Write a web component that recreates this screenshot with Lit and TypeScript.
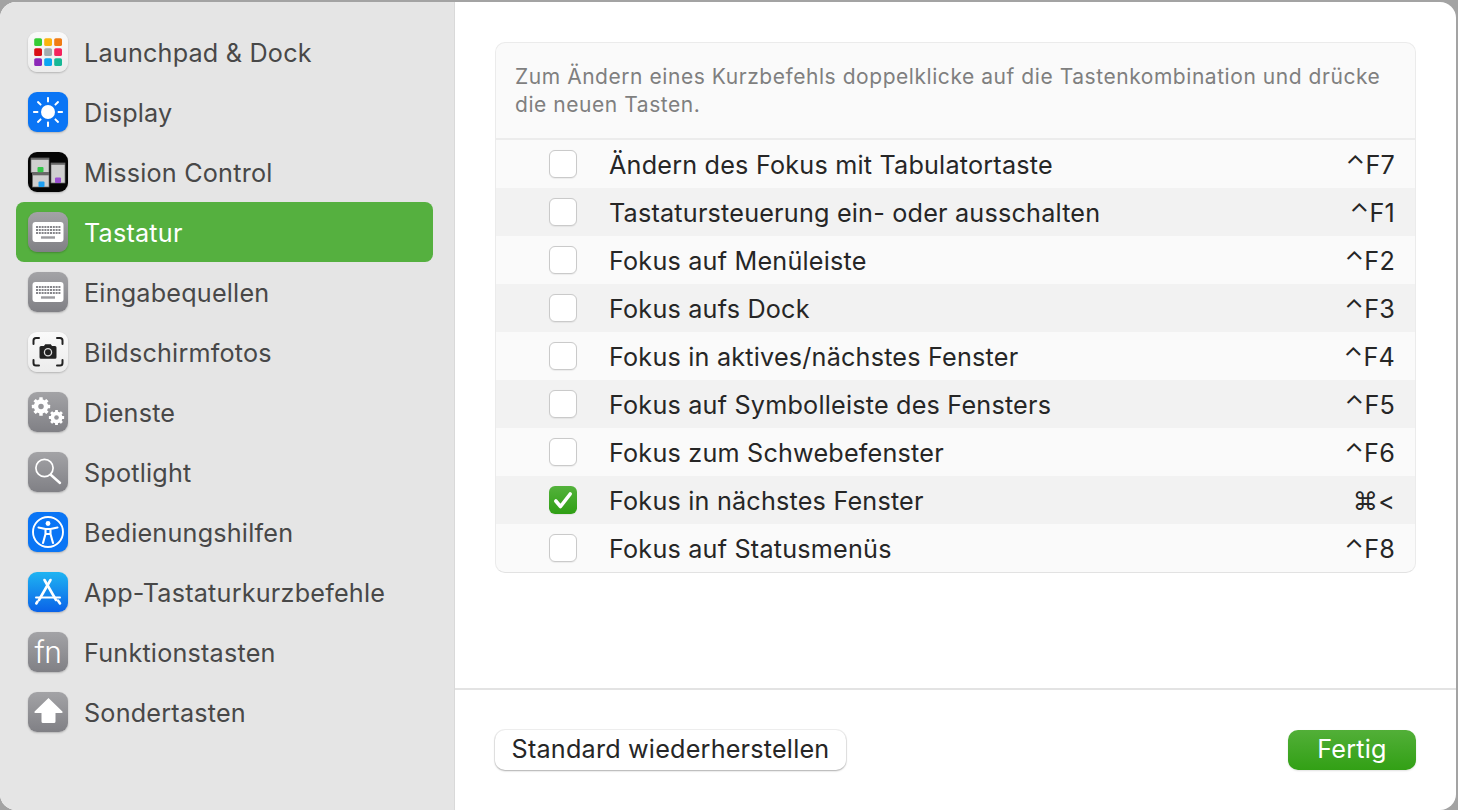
import { LitElement, html, css, svg } from "lit";
import { customElement } from "lit/decorators.js";

const gear = (cx: number, cy: number, r: number) => {
  const teeth = [0, 45, 90, 135].map(
    (a) => svg`<rect x=${cx - r * 0.24} y=${cy - r * 1.27} width=${r * 0.48} height=${r * 2.54} rx="0.5" fill="#fff" transform="rotate(${a} ${cx} ${cy})"/>`
  );
  return svg`${teeth}<circle cx=${cx} cy=${cy} r=${r * 0.7} fill="none" stroke="#fff" stroke-width=${r * 0.6}/><circle cx=${cx} cy=${cy} r=${r * 0.38} fill="#96969a"/>`;
};

const keyboard = svg`
  <rect x="4.5" y="10" width="31" height="20" rx="3" fill="#fff"/>
  ${[14, 17, 20].flatMap((y) =>
    Array.from({ length: 9 }, (_, i) => svg`<rect x=${8 + i * 2.8} y=${y} width="2" height="2" fill="#85858a"/>`)
  )}
  <rect x="13" y="24.3" width="14" height="2.4" fill="#9a9a9e"/>`;

const launchColors = ["#35cc35", "#fbb30e", "#f07c14", "#d90f14", "#a2abae", "#f5245e", "#8c28b8", "#0aa6f2", "#18b896"];

const icons: Record<string, unknown> = {
  launchpad: svg`${launchColors.map(
    (c, i) => svg`<rect x=${6.2 + (i % 3) * 10} y=${6.2 + Math.floor(i / 3) * 10} width="7.8" height="7.8" rx="1.6" fill=${c}/>`
  )}`,
  display: svg`
    <circle cx="20" cy="20" r="7" fill="#fff"/>
    ${[0, 45, 90, 135, 180, 225, 270, 315].map(
      (a) => svg`<rect x="19" y="5" width="2" height="5.4" rx="0.8" fill="#fff" transform="rotate(${a} 20 20)"/>`
    )}`,
  mission: svg`
    <rect x="3" y="6" width="18" height="14.5" fill="#cfcfcf" stroke="#6a6a6a" stroke-width="0.7"/>
    <rect x="3" y="6" width="18" height="1.8" fill="#666"/>
    <rect x="23" y="11" width="14" height="20" fill="#cfcfcf" stroke="#6a6a6a" stroke-width="0.7"/>
    <rect x="23" y="11" width="14" height="1.8" fill="#666"/>
    <rect x="4.5" y="21.5" width="16.5" height="13.5" fill="#cfcfcf" stroke="#6a6a6a" stroke-width="0.7"/>
    <rect x="4.5" y="21.5" width="16.5" height="1.8" fill="#666"/>
    <rect x="9.5" y="15" width="6" height="5.2" rx="1" fill="#35c64a"/>
    <rect x="27" y="25.5" width="6" height="5.5" rx="1" fill="#9a4fd0"/>
    <rect x="10.5" y="29.5" width="6" height="5.5" rx="1" fill="#1e9ff2"/>`,
  keyboard,
  camera: svg`
    <g fill="none" stroke="#222" stroke-width="2" stroke-linecap="round">
      <path d="M5.5 12V8.5Q5.5 6 8 6H11"/><path d="M29 6H32Q34.5 6 34.5 8.5V12"/>
      <path d="M5.5 28V31Q5.5 33.5 8 33.5H11"/><path d="M29 33.5H32Q34.5 33.5 34.5 31V28"/>
    </g>
    <path d="M13 14H16L17.2 12.2H22.8L24 14H27Q28.5 14 28.5 15.5V25.2Q28.5 26.7 27 26.7H13Q11.5 26.7 11.5 25.2V15.5Q11.5 14 13 14Z" fill="#222"/>
    <circle cx="20" cy="20.2" r="3.6" fill="none" stroke="#ddd" stroke-width="1.3"/>`,
  gears: svg`${gear(13, 14.5, 7.2)}${gear(28.5, 25.5, 6)}`,
  search: svg`
    <circle cx="16.5" cy="16" r="8.6" fill="none" stroke="#fff" stroke-width="1.7"/>
    <path d="M23 23L32 31" stroke="#fff" stroke-width="2.4" stroke-linecap="round"/>`,
  access: svg`
    <circle cx="20" cy="20" r="15" fill="none" stroke="#fff" stroke-width="1.9"/>
    <circle cx="20" cy="11.5" r="2.4" fill="#fff"/>
    <path d="M10.5 15.5L17.5 17V22L15 31M29.5 15.5L22.5 17V22L25 31M17.5 17H22.5M17.5 22H22.5" fill="none" stroke="#fff" stroke-width="2.1" stroke-linecap="round" stroke-linejoin="round"/>`,
  appstore: svg`
    <g stroke="#fff" stroke-width="2.6" stroke-linecap="round" fill="none">
      <path d="M22.5 8L11 28"/><path d="M16.5 8L28 28"/>
      <path d="M8 25.5H32" stroke-width="2"/>
      <path d="M9.5 29.5L8.3 31.5"/><path d="M30 28.5L32 31.5"/>
    </g>`,
  shift: svg`<path d="M20.5 6L34.4 19.6Q35.4 21 33.6 21H27.5V29.5Q27.5 31 26 31H15Q13.5 31 13.5 29.5V21H7.4Q5.6 21 6.6 19.6Z" fill="#fff"/>`,
};

const sidebar: [string, string, string][] = [
  ["Launchpad & Dock", "launchpad", "light"],
  ["Display", "display", "blue"],
  ["Mission Control", "mission", "black"],
  ["Tastatur", "keyboard", "grey"],
  ["Eingabequellen", "keyboard", "grey"],
  ["Bildschirmfotos", "camera", "light"],
  ["Dienste", "gears", "grey"],
  ["Spotlight", "search", "grey"],
  ["Bedienungshilfen", "access", "blue"],
  ["App-Tastaturkurzbefehle", "appstore", "sky"],
  ["Funktionstasten", "fn", "grey"],
  ["Sondertasten", "shift", "grey"],
];

const rows: [string, string, boolean][] = [
  ["Ändern des Fokus mit Tabulatortaste", "⌃F7", false],
  ["Tastatursteuerung ein- oder ausschalten", "⌃F1", false],
  ["Fokus auf Menüleiste", "⌃F2", false],
  ["Fokus aufs Dock", "⌃F3", false],
  ["Fokus in aktives/nächstes Fenster", "⌃F4", false],
  ["Fokus auf Symbolleiste des Fensters", "⌃F5", false],
  ["Fokus zum Schwebefenster", "⌃F6", false],
  ["Fokus in nächstes Fenster", "⌘<", true],
  ["Fokus auf Statusmenüs", "⌃F8", false],
];

@customElement("app-root")
export class AppRoot extends LitElement {
  static styles = css`
    :host {
      display: block;
      width: 1458px;
      height: 810px;
      overflow: hidden;
      background: #a3a3a3;
      font-family: Inter, "Noto Sans", "DejaVu Sans", sans-serif;
    }
    .window {
      display: flex;
      height: 808px;
      margin: 2px 2px 0 0;
      border-radius: 16px;
      overflow: hidden;
      background: #fff;
    }
    .side {
      box-sizing: border-box;
      width: 455px;
      flex: none;
      padding: 20px 21px 0 16px;
      background: #e5e5e5;
      border-right: 1px solid #d9d9d9;
    }
    .item {
      display: flex;
      align-items: center;
      height: 60px;
      padding-left: 12px;
      gap: 16px;
      border-radius: 8px;
      font-size: 25.2px;
      letter-spacing: 0.2px;
      color: #484848;
    }
    .item > span {
      padding-top: 2px;
    }
    .item.sel {
      background: #55b03f;
      color: #fff;
    }
    .icon {
      position: relative;
      flex: none;
      width: 40px;
      height: 40px;
      border-radius: 9px;
      box-shadow: 0 1px 2px rgba(0, 0, 0, 0.22);
      display: flex;
      align-items: center;
      justify-content: center;
    }
    .icon svg {
      display: block;
      width: 40px;
      height: 40px;
    }
    .light { background: linear-gradient(#fafafa, #ececec); }
    .blue { background: #0a75f5; }
    .black { background: #050505; }
    .grey { background: linear-gradient(#a3a3a6, #808085); }
    .sky { background: linear-gradient(#1fb4f2, #0a62e8); }
    .fn {
      color: #fff;
      font-size: 30px;
      font-weight: 300;
      line-height: 40px;
      letter-spacing: -0.5px;
    }
    .main {
      flex: 1;
      min-width: 0;
      display: flex;
      flex-direction: column;
    }
    .content {
      flex: 1;
      padding: 40px 40px 0 40px;
    }
    .table {
      box-sizing: border-box;
      width: 921px;
      height: 531px;
      border: 1px solid #ebebeb;
      border-bottom-color: #e2e2e2;
      border-radius: 10px;
      overflow: hidden;
      background: #fafafa;
    }
    .head {
      box-sizing: border-box;
      height: 97px;
      padding: 20px 20px 0 19px;
      font-size: 21px;
      letter-spacing: 0.55px;
      line-height: 28px;
      color: #7f7f7f;
      border-bottom: 2px solid #ececec;
    }
    .row {
      display: flex;
      align-items: center;
      height: 48px;
      padding: 0 20px 0 53px;
      font-size: 25.2px;
      letter-spacing: 0.2px;
      color: #262626;
    }
    .row:nth-child(even) {
      background: #f2f2f2;
    }
    .row > span {
      padding-top: 2px;
    }
    .box {
      box-sizing: border-box;
      flex: none;
      width: 28px;
      height: 28px;
      margin-right: 32px;
      border: 1px solid #cacaca;
      border-radius: 6px;
      background: #fff;
      box-shadow: 0 0.5px 1px rgba(0, 0, 0, 0.06);
    }
    .box.on {
      border: none;
      background: linear-gradient(#54b23c, #2f9f14);
    }
    .box svg {
      display: block;
      width: 28px;
      height: 28px;
    }
    .label { flex: 1; }
    .foot {
      box-sizing: border-box;
      height: 122px;
      padding: 40px 40px 0 40px;
      border-top: 2px solid #e3e3e3;
      display: flex;
      justify-content: space-between;
      align-items: flex-start;
    }
    .btn {
      box-sizing: border-box;
      height: 40px;
      padding-bottom: 2px;
      display: flex;
      align-items: center;
      justify-content: center;
      border-radius: 10px;
      font-size: 25.2px;
      letter-spacing: 0.2px;
    }
    .plain {
      width: 351px;
      color: #262626;
      background: #fff;
      box-shadow: 0 0 0 1px rgba(0, 0, 0, 0.06), 0 1px 2px rgba(0, 0, 0, 0.28);
    }
    .primary {
      width: 128px;
      color: #fff;
      background: linear-gradient(#52af38, #32a015);
      box-shadow: 0 1px 2px rgba(0, 0, 0, 0.12);
    }
  `;

  render() {
    return html`
      <div class="window">
        <div class="side">
          ${sidebar.map(
            ([name, icon, tone]) => html`
              <div class="item ${name === "Tastatur" ? "sel" : ""}">
                <div class="icon ${tone}">
                  ${icon === "fn"
                    ? html`<span class="fn">fn</span>`
                    : html`<svg viewBox="0 0 40 40">${icons[icon]}</svg>`}
                </div>
                <span>${name}</span>
              </div>
            `
          )}
        </div>
        <div class="main">
          <div class="content">
            <div class="table">
              <div class="head">Zum Ändern eines Kurzbefehls doppelklicke auf die Tastenkombination und drücke die neuen Tasten.</div>
              <div>
                ${rows.map(
                  ([label, key, on]) => html`
                    <div class="row">
                      <div class="box ${on ? "on" : ""}">
                        ${on
                          ? html`<svg viewBox="0 0 28 28"><path d="M6.8 15L11.5 20.5L21.2 8" fill="none" stroke="#fff" stroke-width="3.6" stroke-linecap="round" stroke-linejoin="round"/></svg>`
                          : ""}
                      </div>
                      <span class="label">${label}</span>
                      <span>${key}</span>
                    </div>
                  `
                )}
              </div>
            </div>
          </div>
          <div class="foot">
            <div class="btn plain">Standard wiederherstellen</div>
            <div class="btn primary">Fertig</div>
          </div>
        </div>
      </div>
    `;
  }
}
